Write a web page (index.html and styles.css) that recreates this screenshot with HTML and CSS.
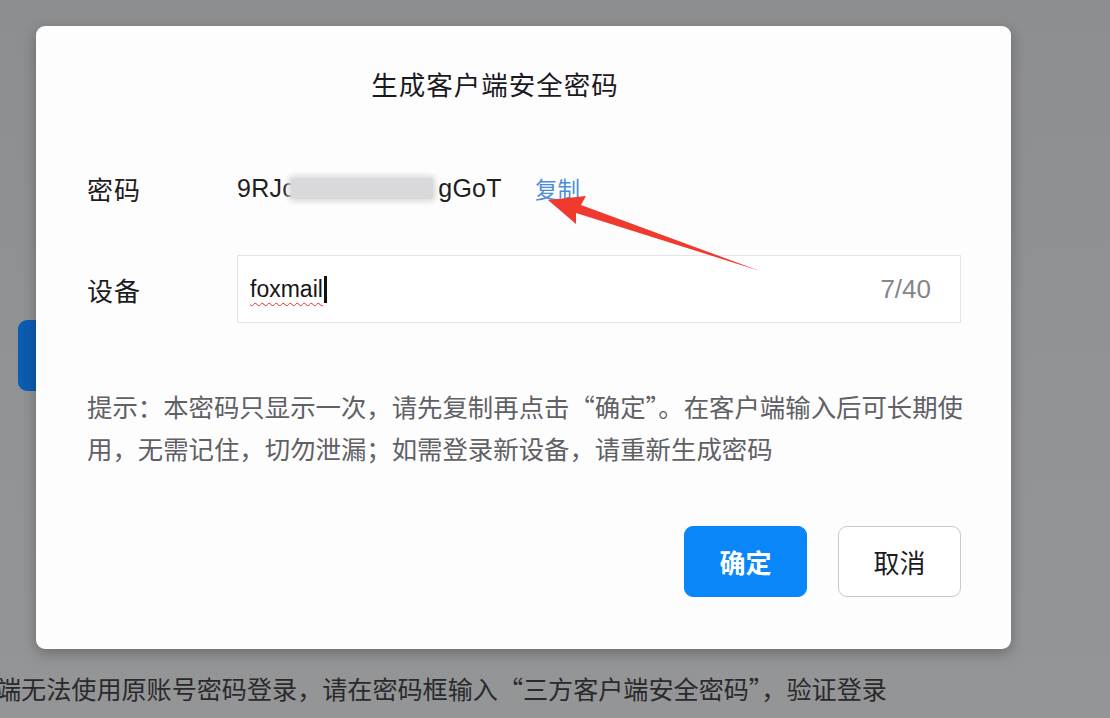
FILE: index.html
```html
<!DOCTYPE html>
<html lang="zh-CN">
<head>
<meta charset="utf-8">
<title>生成客户端安全密码</title>
<link rel="stylesheet" href="styles.css">
</head>
<body>
<div class="page">
  <div class="bg-button"></div>
  <p class="bg-text">端无法使用原账号密码登录，请在密码框输入“三方客户端安全密码”，验证登录</p>
</div>
<div class="dialog">
  <h2 class="title">生成客户端安全密码</h2>
  <div class="row pw-row">
    <span class="label">密码</span>
    <div class="value">
      <span class="pw">9RJc</span><span class="mask"></span><span class="pw">gGoT</span>
      <a class="copy">复制</a>
    </div>
  </div>
  <div class="row input-row">
    <span class="label">设备</span>
    <div class="input">
      <span class="input-text">foxmail</span><span class="caret"></span>
      <span class="count">7/40</span>
    </div>
  </div>
  <p class="hint">提示：本密码只显示一次，请先复制再点击“确定”。在客户端输入后可长期使<br>用，无需记住，切勿泄漏；如需登录新设备，请重新生成密码</p>
  <div class="actions">
    <button class="btn primary">确定</button>
    <button class="btn">取消</button>
  </div>
  <svg class="arrow" width="975" height="623" viewBox="0 0 975 623">
    <polygon points="512,174 550,170 545,179 724,245 540,187 540,198" fill="#f03a2e"/>
  </svg>
</div>
</body>
</html>
```

FILE: styles.css
```css
* { box-sizing: border-box; }
html, body { margin: 0; padding: 0; }
body {
  width: 1110px;
  height: 718px;
  overflow: hidden;
  background: linear-gradient(180deg, #8d8e90 0%, #929395 60%, #949597 100%);
  font-family: "Noto Sans CJK SC", "Liberation Sans", sans-serif;
  position: relative;
}
.page {
  padding-top: 320px;
}
.bg-button {
  margin-left: 18px;
  width: 120px;
  height: 71px;
  border-radius: 9px;
  background: #0b5db2;
}
.bg-text {
  margin: 281px 0 0 -4px;
  font-size: 25.1px;
  line-height: 32px;
  color: #2a2a2c;
  white-space: nowrap;
}
.dialog {
  position: absolute;
  left: 36px;
  top: 26px;
  width: 975px;
  height: 623px;
  background: #fdfdfe;
  border-radius: 9px;
  box-shadow: 0 4px 14px rgba(0,0,0,0.28);
  padding: 40px 50px 0 51px;
}
.title {
  margin: 0;
  text-align: center;
  font-size: 26.5px;
  line-height: 36px;
  font-weight: 400;
  letter-spacing: 1px;
  color: #1a1a1e;
  padding-right: 58px;
}
.row {
  display: flex;
  align-items: center;
}
.label {
  width: 150px;
  flex: none;
  font-size: 26px;
  letter-spacing: 1px;
  color: #1c1c1f;
}
.pw-row {
  margin-top: 61px;
  height: 50px;
}
.value {
  display: flex;
  align-items: center;
  font-family: "Liberation Sans", sans-serif;
}
.pw {
  font-size: 25px;
  color: #1f1f22;
  letter-spacing: 0.3px;
}
.mask {
  display: inline-block;
  width: 142px;
  height: 21px;
  margin-left: -4px;
  margin-right: 5px;
  background: #d9d9dc;
  border-radius: 3px;
  box-shadow: 0 0 5px 3px #dedee0;
}
.copy {
  margin-left: 33px;
  font-family: "Noto Sans CJK SC", sans-serif;
  font-size: 22.5px;
  color: #4c8dd8;
}
.input-row {
  margin-top: 42px;
}
.input {
  flex: 1;
  height: 68px;
  border: 1px solid #e4e4e8;
  background: #fff;
  display: flex;
  align-items: center;
  padding: 0 29px 0 12px;
  font-family: "Liberation Sans", sans-serif;
}
.input-text {
  font-size: 23px;
  color: #151518;
  text-decoration: underline wavy #d9302b;
  text-decoration-thickness: 1px;
  text-underline-offset: 5px;
}
.caret {
  display: inline-block;
  width: 3px;
  height: 27px;
  background: #111;
  margin-left: 1px;
}
.count {
  margin-left: auto;
  font-size: 26px;
  color: #85858a;
}
.hint {
  margin: 62px 0 0;
  font-size: 25.4px;
  line-height: 42px;
  color: #606065;
  white-space: nowrap;
}
.actions {
  margin-top: 57px;
  display: flex;
  justify-content: flex-end;
  gap: 31px;
}
.btn {
  width: 123px;
  height: 71px;
  border-radius: 9px;
  border: 1px solid #c9c9cd;
  background: #fff;
  font-family: "Noto Sans CJK SC", sans-serif;
  font-size: 26px;
  color: #1c1c1f;
  padding: 0;
}
.btn.primary {
  background: #0a86fb;
  border-color: #0a86fb;
  color: #fff;
  font-weight: 700;
}
.arrow {
  position: absolute;
  left: 0;
  top: 0;
  pointer-events: none;
}
```
